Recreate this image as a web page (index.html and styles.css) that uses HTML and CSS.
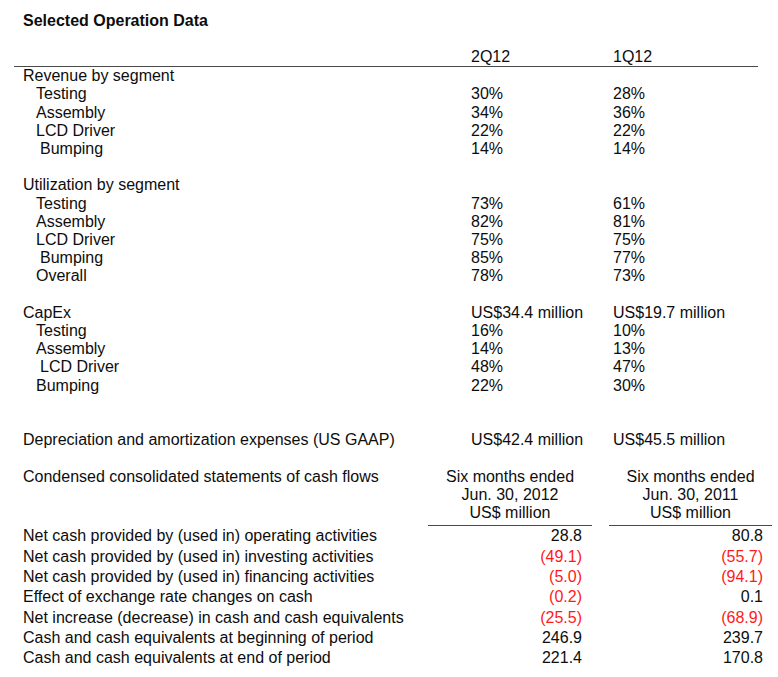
FILE: index.html
```html
<!DOCTYPE html>
<html>
<head>
<meta charset="utf-8">
<link rel="stylesheet" href="styles.css">
</head>
<body>
<div class="page">
  <h1 class="title">Selected Operation Data</h1>

  <div class="ops">
    <div class="head lbl"></div><div class="head">2Q12</div><div class="head">1Q12</div>

    <div class="lbl">Revenue by segment</div><div></div><div></div>
    <div class="lbl sub">Testing</div><div>30%</div><div>28%</div>
    <div class="lbl sub">Assembly</div><div>34%</div><div>36%</div>
    <div class="lbl sub">LCD Driver</div><div>22%</div><div>22%</div>
    <div class="lbl sub2">Bumping</div><div>14%</div><div>14%</div>
    <div class="blank"></div>

    <div class="lbl">Utilization by segment</div><div></div><div></div>
    <div class="lbl sub">Testing</div><div>73%</div><div>61%</div>
    <div class="lbl sub">Assembly</div><div>82%</div><div>81%</div>
    <div class="lbl sub">LCD Driver</div><div>75%</div><div>75%</div>
    <div class="lbl sub2">Bumping</div><div>85%</div><div>77%</div>
    <div class="lbl sub">Overall</div><div>78%</div><div>73%</div>
    <div class="blank"></div>

    <div class="lbl">CapEx</div><div>US$34.4 million</div><div>US$19.7 million</div>
    <div class="lbl sub">Testing</div><div>16%</div><div>10%</div>
    <div class="lbl sub">Assembly</div><div>14%</div><div>13%</div>
    <div class="lbl sub2">LCD Driver</div><div>48%</div><div>47%</div>
    <div class="lbl sub">Bumping</div><div>22%</div><div>30%</div>
    <div class="blank"></div>
    <div class="blank"></div>

    <div class="lbl">Depreciation and amortization expenses (US GAAP)</div><div>US$42.4 million</div><div>US$45.5 million</div>
    <div class="blank"></div>
  </div>

  <div class="cash">
    <div class="lbl cond">Condensed consolidated statements of cash flows</div>
    <div class="colhead">Six months ended<br>Jun. 30, 2012<br>US$ million</div>
    <div class="gap"></div>
    <div class="colhead">Six months ended<br>Jun. 30, 2011<br>US$ million</div>

    <div class="lbl">Net cash provided by (used in) operating activities</div><div class="num">28.8</div><div class="gap"></div><div class="num last">80.8</div>
    <div class="lbl">Net cash provided by (used in) investing activities</div><div class="num neg">(49.1)</div><div class="gap"></div><div class="num last neg">(55.7)</div>
    <div class="lbl">Net cash provided by (used in) financing activities</div><div class="num neg">(5.0)</div><div class="gap"></div><div class="num last neg">(94.1)</div>
    <div class="lbl">Effect of exchange rate changes on cash</div><div class="num neg">(0.2)</div><div class="gap"></div><div class="num last">0.1</div>
    <div class="lbl">Net increase (decrease) in cash and cash equivalents</div><div class="num neg">(25.5)</div><div class="gap"></div><div class="num last neg">(68.9)</div>
    <div class="lbl">Cash and cash equivalents at beginning of period</div><div class="num">246.9</div><div class="gap"></div><div class="num last">239.7</div>
    <div class="lbl">Cash and cash equivalents at end of period</div><div class="num">221.4</div><div class="gap"></div><div class="num last">170.8</div>
  </div>
</div>
</body>
</html>
```

FILE: styles.css
```css
html, body {
  margin: 0;
  padding: 0;
  background: #ffffff;
}

body {
  font-family: "Liberation Sans", Arial, sans-serif;
  font-size: 16px;
  color: #0d0d0d;
}

.page {
  padding: 12px 0 0 14px;
  width: 758px;
}

.title {
  margin: 0 0 16px 9px;
  font-size: 16px;
  font-weight: bold;
  line-height: 18px;
}

.ops {
  display: grid;
  grid-template-columns: 457px 142px 145px;
  line-height: 18.2px;
  white-space: nowrap;
}

.ops .head {
  border-bottom: 1px solid #4a4a4a;
  padding-top: 2px;
}

.lbl {
  padding-left: 9px;
}

.sub {
  padding-left: 22px;
}

.sub2 {
  padding-left: 26px;
}

.blank {
  grid-column: 1 / -1;
  height: 18.2px;
}

.cash {
  display: grid;
  grid-template-columns: 414px 164px 17px 163px;
  line-height: 20.3px;
  white-space: nowrap;
}

.cash .cond {
  line-height: 18.3px;
}

.cash .colhead {
  text-align: center;
  line-height: 18.3px;
  padding-bottom: 3px;
  border-bottom: 1px solid #4a4a4a;
}

.num {
  text-align: right;
  padding-right: 10px;
}

.num.last {
  padding-right: 9px;
}

.neg {
  color: #ff1a1a;
}
```
